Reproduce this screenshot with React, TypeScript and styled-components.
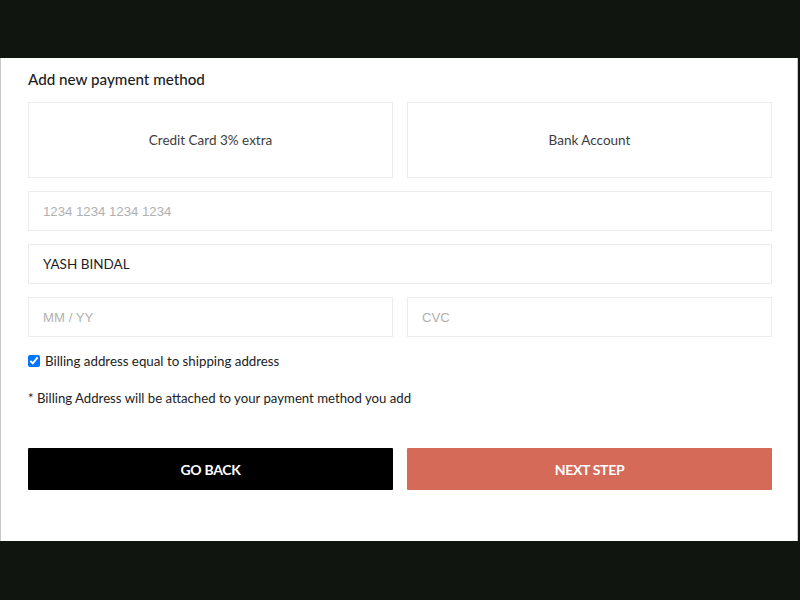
import styled, { createGlobalStyle } from "styled-components";

// #region Style

const GlobalStyle = createGlobalStyle`
  html, body {
    margin: 0;
    padding: 0;
    background: #111510;
  }
  * {
    box-sizing: border-box;
  }
`;

const Screen = styled.div`
  width: 800px;
  height: 600px;
  padding-top: 58px;
  background: #111510;
`;

const Card = styled.div`
  width: 798px;
  height: 483px;
  background: #ffffff;
  border-left: 1px solid #c9c9c9;
  border-right: 1px solid #c9c9c9;
  padding: 11px 25px 0 27px;
  font-family: Lato, "Noto Sans", sans-serif;
`;

const Title = styled.h2`
  margin: 0 0 13px;
  font-size: 15.2px;
  line-height: 20px;
  font-weight: 500;
  color: #1c1c1c;
`;

const Row = styled.div`
  display: flex;
  gap: 14px;
  margin-bottom: 13px;
`;

const MethodOption = styled.button`
  flex: 1;
  height: 76px;
  border: 1px solid #ececec;
  background: #ffffff;
  font-family: Lato, "Noto Sans", sans-serif;
  font-size: 13.5px;
  color: #3d3d3d;
  cursor: pointer;
`;

const Field = styled.input<{ $filled?: boolean }>`
  flex: 1;
  min-width: 0;
  height: 40px;
  border: 1px solid #ececec;
  padding: 0 14px;
  font-family: ${(p) =>
    p.$filled ? `Lato, "Noto Sans", sans-serif` : `"Liberation Sans", Arial, sans-serif`};
  font-size: ${(p) => (p.$filled ? "13.5px" : "13.2px")};
  color: #1e1e1e;
  outline: none;

  &::placeholder {
    color: #b0b0b0;
  }
`;

const CheckRow = styled.label`
  display: flex;
  align-items: center;
  gap: 5px;
  height: 20px;
  margin-top: 14px;
  font-size: 13.3px;
  color: #222;
`;

const Check = styled.input`
  margin: 0;
  width: 12px;
  height: 12px;
`;

const Note = styled.p`
  margin: 17px 0 0;
  font-size: 13.2px;
  line-height: 20px;
  color: #222;
`;

const Actions = styled.div`
  display: flex;
  gap: 14px;
  margin-top: 40px;
`;

const ActionButton = styled.button<{ $primary?: boolean }>`
  flex: 1;
  height: 42px;
  border: 0;
  border-radius: 1px;
  background: ${(p) => (p.$primary ? "#d56a59" : "#000000")};
  color: #ffffff;
  font-family: Lato, "Noto Sans", sans-serif;
  font-size: 14px;
  font-weight: 700;
  letter-spacing: -0.3px;
  text-transform: uppercase;
  cursor: pointer;
`;

// #endregion

export default function App() {
  return (
    <Screen>
      <GlobalStyle />
      <Card>
        <Title>Add new payment method</Title>
        <Row>
          <MethodOption>Credit Card 3% extra</MethodOption>
          <MethodOption>Bank Account</MethodOption>
        </Row>
        <Row>
          <Field placeholder="1234 1234 1234 1234" />
        </Row>
        <Row>
          <Field $filled defaultValue="YASH BINDAL" />
        </Row>
        <Row style={{ marginBottom: 0 }}>
          <Field placeholder="MM / YY" />
          <Field placeholder="CVC" />
        </Row>
        <CheckRow>
          <Check type="checkbox" defaultChecked />
          Billing address equal to shipping address
        </CheckRow>
        <Note>* Billing Address will be attached to your payment method you add</Note>
        <Actions>
          <ActionButton>Go back</ActionButton>
          <ActionButton $primary>Next step</ActionButton>
        </Actions>
      </Card>
    </Screen>
  );
}
